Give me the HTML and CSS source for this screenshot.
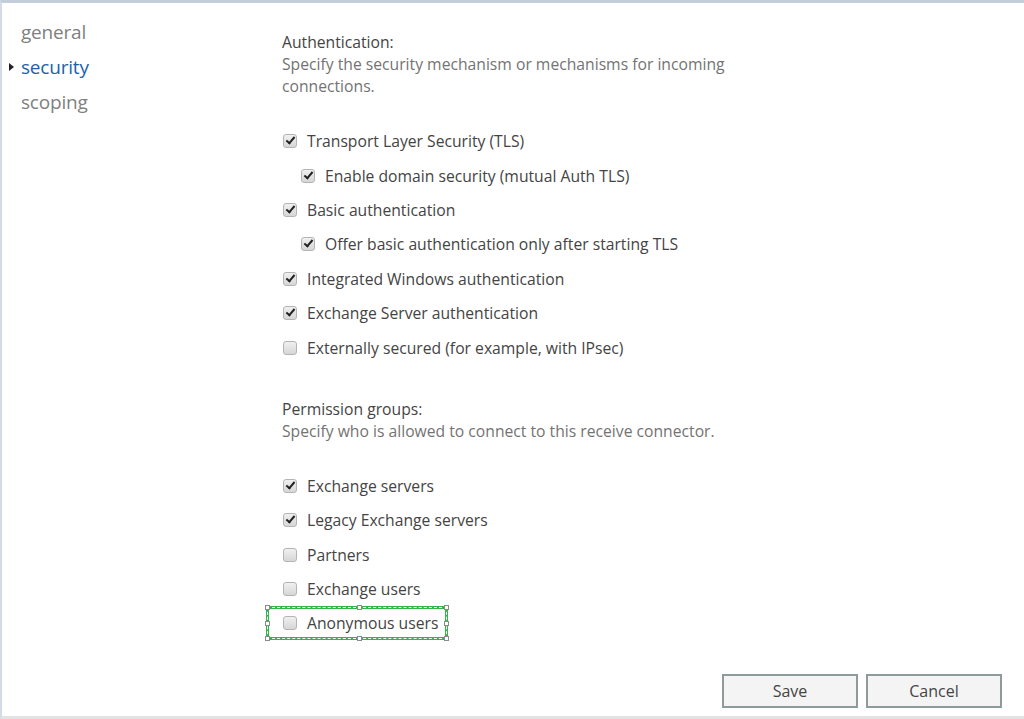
FILE: index.html
```html
<!DOCTYPE html>
<html lang="en">

<head>
  <meta charset="UTF-8">
  <meta name="viewport" content="width=device-width, initial-scale=1.0">
  <title>Receive connector - security</title>
  <link rel="stylesheet" href="styles.css">
</head>

<body>

  <div class="frame">
    <ul class="nav">
      <li>general</li>
      <li class="active">security</li>
      <li>scoping</li>
    </ul>

    <div class="content">
      <div class="section">
        <div class="caption">Authentication:</div>
        <div class="hint">Specify the security mechanism or mechanisms for incoming<br>connections.</div>
      </div>

      <div class="options">
        <div class="row"><span class="box checked"></span>Transport Layer Security (TLS)</div>
        <div class="row sub"><span class="box checked"></span>Enable domain security (mutual Auth TLS)</div>
        <div class="row"><span class="box checked"></span>Basic authentication</div>
        <div class="row sub"><span class="box checked"></span>Offer basic authentication only after starting TLS</div>
        <div class="row"><span class="box checked"></span>Integrated Windows authentication</div>
        <div class="row"><span class="box checked"></span>Exchange Server authentication</div>
        <div class="row"><span class="box"></span>Externally secured (for example, with IPsec)</div>
      </div>

      <div class="section second">
        <div class="caption">Permission groups:</div>
        <div class="hint">Specify who is allowed to connect to this receive connector.</div>
      </div>

      <div class="options">
        <div class="row"><span class="box checked"></span>Exchange servers</div>
        <div class="row"><span class="box checked"></span>Legacy Exchange servers</div>
        <div class="row"><span class="box"></span>Partners</div>
        <div class="row"><span class="box"></span>Exchange users</div>
        <div class="row focused">
          <span class="box"></span>Anonymous users
          <i class="grip tl"></i><i class="grip tm"></i><i class="grip tr"></i>
          <i class="grip ml"></i><i class="grip mr"></i>
          <i class="grip bl"></i><i class="grip bm"></i><i class="grip br"></i>
        </div>
      </div>

      <div class="buttons">
        <button type="button">Save</button>
        <button type="button">Cancel</button>
      </div>
    </div>
  </div>

</body>

</html>
```

FILE: styles.css
```css
body {
  margin: 0;
  padding: 0;
  background-color: #fff;
  font-family: 'Open Sans', 'Noto Sans', sans-serif;
}

.frame {
  display: flex;
  height: 719px;
  box-sizing: border-box;
  border-top: 3px solid #c4cedb;
  border-left: 2px solid #d2dbe6;
  border-bottom: 3px solid #e2e2e2;
}

.nav {
  list-style: none;
  margin: 0;
  padding: 12px 0 0 19px;
  width: 261px;
}

.nav li {
  position: relative;
  font-size: 19px;
  line-height: 35px;
  color: #808080;
  letter-spacing: -0.2px;
}

.nav li.active {
  color: #1a62ad;
}

.nav li.active::before {
  content: '';
  position: absolute;
  left: -12px;
  top: 13px;
  border-top: 4px solid transparent;
  border-bottom: 4px solid transparent;
  border-left: 5px solid #222;
}

.content {
  flex: 1;
  display: flex;
  flex-direction: column;
  padding-top: 28px;
}

.caption,
.hint {
  font-size: 15.7px;
  line-height: 22px;
}

.caption {
  color: #444;
}

.hint {
  color: #737373;
}

.section.second {
  margin-top: 33px;
}

.options {
  margin-top: 27px;
}

.row {
  display: flex;
  align-items: center;
  height: 34.4px;
  font-size: 15.7px;
  color: #444;
}

.row.sub {
  padding-left: 18px;
}

.box {
  width: 14px;
  height: 14px;
  margin: 0 10px 0 1px;
  border: 1px solid #b4b4b4;
  border-radius: 3px;
  background: linear-gradient(#f0f0f0, #d6d6d6);
  box-sizing: border-box;
  position: relative;
}

.box.checked::after {
  content: '';
  position: absolute;
  left: 4px;
  top: 0px;
  width: 3px;
  height: 7px;
  border-right: 2.5px solid #222;
  border-bottom: 2.5px solid #222;
  transform: rotate(40deg);
}

.row.focused {
  position: relative;
  display: inline-flex;
  box-sizing: border-box;
  margin-left: -16px;
  padding: 0 7px 0 13px;
  height: 34px;
  border: 3px solid #34b44c;
  outline: 1px dashed #fff;
  outline-offset: -2px;
}

.grip {
  position: absolute;
  width: 3px;
  height: 3px;
  background: #fff;
  border: 1px solid #8a8a8a;
}

.grip.tl { left: -4px; top: -4px; }
.grip.tm { left: 50%; top: -4px; }
.grip.tr { right: -4px; top: -4px; }
.grip.ml { left: -4px; top: 12px; }
.grip.mr { right: -4px; top: 12px; }
.grip.bl { left: -4px; bottom: -4px; }
.grip.bm { left: 50%; bottom: -4px; }
.grip.br { right: -4px; bottom: -4px; }

.buttons {
  display: flex;
  justify-content: flex-end;
  gap: 8px;
  margin-top: auto;
  padding: 0 22px 8px 0;
}

button {
  width: 136px;
  height: 34px;
  font-family: 'Open Sans', 'Noto Sans', sans-serif;
  font-size: 16px;
  color: #444;
  background-color: #f4f4f4;
  border: 2px solid #8e9b9b;
  cursor: pointer;
}
```
